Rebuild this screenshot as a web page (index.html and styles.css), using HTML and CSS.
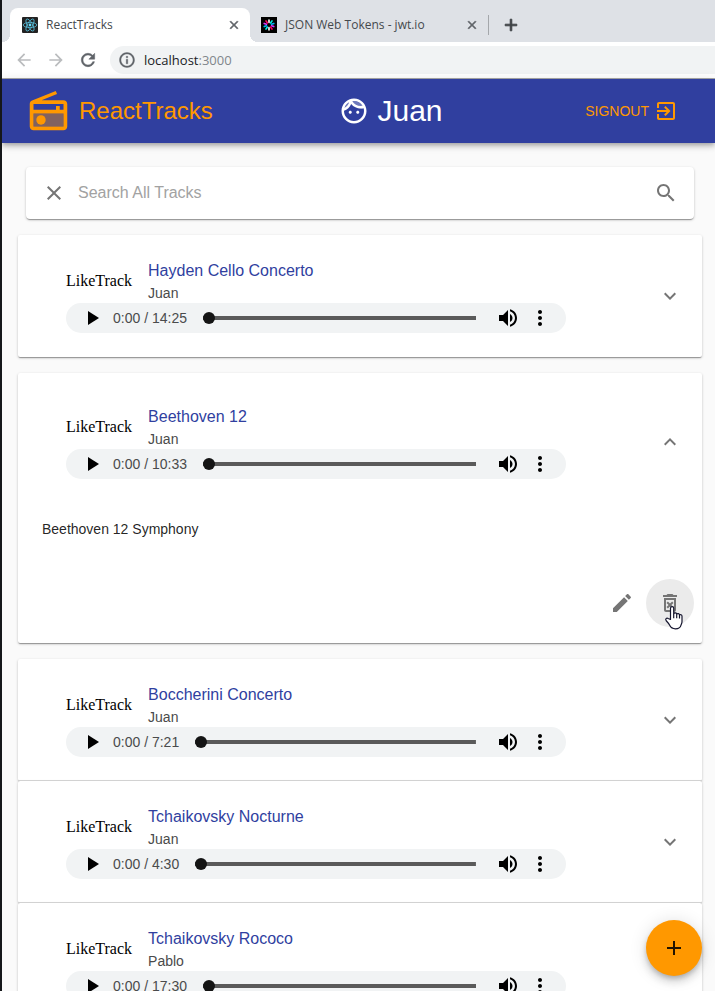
FILE: index.html
```html
<!DOCTYPE html>
<html lang="en">
<head>
<meta charset="utf-8">
<meta name="viewport" content="width=device-width, initial-scale=1">
<title>ReactTracks</title>
<link rel="stylesheet" href="styles.css">
</head>
<body>
<svg class="sprite" aria-hidden="true">
  <symbol id="i-play" viewBox="0 0 24 24"><path d="M8 5v14l11-7z"/></symbol>
  <symbol id="i-volume" viewBox="0 0 24 24"><path d="M3 9v6h4l5 5V4L7 9H3zm13.5 3c0-1.77-1.02-3.29-2.5-4.03v8.05c1.48-.73 2.5-2.25 2.5-4.02zM14 3.23v2.06c2.89.86 5 3.54 5 6.71s-2.11 5.85-5 6.71v2.06c4.01-.91 7-4.49 7-8.77s-2.99-7.86-7-8.77z"/></symbol>
  <symbol id="i-more" viewBox="0 0 24 24"><path d="M12 8c1.1 0 2-.9 2-2s-.9-2-2-2-2 .9-2 2 .9 2 2 2zm0 2c-1.1 0-2 .9-2 2s.9 2 2 2 2-.9 2-2-.9-2-2-2zm0 6c-1.1 0-2 .9-2 2s.9 2 2 2 2-.9 2-2-.9-2-2-2z"/></symbol>
  <symbol id="i-down" viewBox="0 0 24 24"><path d="M16.59 8.59L12 13.17 7.41 8.59 6 10l6 6 6-6z"/></symbol>
  <symbol id="i-up" viewBox="0 0 24 24"><path d="M12 8l-6 6 1.41 1.41L12 10.83l4.59 4.58L18 14z"/></symbol>
  <symbol id="i-close" viewBox="0 0 24 24"><path d="M19 6.41L17.59 5 12 10.59 6.41 5 5 6.41 10.59 12 5 17.59 6.41 19 12 13.41 17.59 19 19 17.59 13.41 12z"/></symbol>
  <symbol id="i-back" viewBox="0 0 24 24"><path d="M20 11H7.83l5.59-5.59L12 4l-8 8 8 8 1.41-1.41L7.83 13H20v-2z"/></symbol>
  <symbol id="i-forward" viewBox="0 0 24 24"><path d="M12 4l-1.41 1.41L16.17 11H4v2h12.17l-5.58 5.59L12 20l8-8z"/></symbol>
  <symbol id="i-add" viewBox="0 0 24 24"><path d="M19 13h-6v6h-2v-6H5v-2h6V5h2v6h6v2z"/></symbol>
</svg>

<div class="tabs">
  <div class="tab tab-active">
    <svg class="favicon" viewBox="0 0 16 16" aria-hidden="true">
      <rect width="16" height="16" rx="1" fill="#222"/>
      <g fill="none" stroke="#55bcd8" stroke-width=".8">
        <ellipse cx="8" cy="8" rx="6.8" ry="2.6"/>
        <ellipse cx="8" cy="8" rx="6.8" ry="2.6" transform="rotate(60 8 8)"/>
        <ellipse cx="8" cy="8" rx="6.8" ry="2.6" transform="rotate(120 8 8)"/>
      </g>
      <circle cx="8" cy="8" r="1.4" fill="#61dafb"/>
    </svg>
    <span class="tab-title">ReactTracks</span>
    <button class="tab-close" aria-label="Close tab"><svg><use href="#i-close"/></svg></button>
  </div>
  <div class="tab">
    <svg class="favicon" viewBox="0 0 16 16" aria-hidden="true">
      <rect width="16" height="16" fill="#000"/>
      <g stroke-width="1.6" stroke-linecap="round">
        <path d="M8 5.4V3M8 10.6V13" stroke="#fff"/>
        <path d="M9.5 5.9L11 3.9M6.5 10.1L5 12.1" stroke="#00f2e6"/>
        <path d="M10.5 7.2L12.8 6.4M5.5 8.8L3.2 9.6" stroke="#00b9f1"/>
        <path d="M10.5 8.8L12.8 9.6M5.5 7.2L3.2 6.4" stroke="#d63aff"/>
        <path d="M9.5 10.1L11 12.1M6.5 5.9L5 3.9" stroke="#fb015b"/>
      </g>
    </svg>
    <span class="tab-title">JSON Web Tokens - jwt.io</span>
    <button class="tab-close" aria-label="Close tab"><svg><use href="#i-close"/></svg></button>
  </div>
  <button class="tab-new" aria-label="New tab"><svg><use href="#i-add"/></svg></button>
</div>

<div class="toolbar">
  <button class="nav-btn nav-off" aria-label="Back"><svg><use href="#i-back"/></svg></button>
  <button class="nav-btn nav-off" aria-label="Forward"><svg><use href="#i-forward"/></svg></button>
  <button class="nav-btn" aria-label="Reload"><svg viewBox="0 0 24 24"><path stroke="currentColor" stroke-width=".6" d="M17.65 6.35C16.2 4.9 14.21 4 12 4c-4.42 0-7.99 3.58-7.99 8s3.57 8 7.99 8c3.73 0 6.84-2.55 7.73-6h-2.08c-.82 2.33-3.04 4-5.65 4-3.31 0-6-2.69-6-6s2.69-6 6-6c1.66 0 3.14.69 4.22 1.78L13 11h7V4l-2.35 2.35z"/></svg></button>
  <div class="address">
    <svg viewBox="0 0 24 24" aria-hidden="true"><path stroke="currentColor" stroke-width=".5" d="M11 17h2v-6h-2v6zm1-15C6.48 2 2 6.48 2 12s4.480 10 10 10 10-4.480 10-10S17.520 2 12 2zm0 18c-4.410 0-8-3.590-8-8s3.590-8 8-8 8 3.590 8 8-3.590 8-8 8zM11 9h2V7h-2v2z"/></svg>
    <span>localhost<span class="port">:3000</span></span>
  </div>
</div>

<header class="appbar">
  <a class="brand" href="#">
    <svg viewBox="0 0 24 24" aria-hidden="true"><path opacity=".4" d="M4 13h16v7H4z"/><path fill-rule="evenodd" d="M2 20c0 1.100.9 2 2 2h16c1.100 0 2-.9 2-2V8c0-1.110-.9-2-2-2H8.300l8.260-3.340L15.880 1 3.240 6.150C2.510 6.430 2 7.170 2 8v12zM4 8h16v3h-2V9h-2v2H4V8zm0 5h16v7H4v-7z"/><circle cx="8" cy="16.500" r="2.500"/></svg>
    <span>ReactTracks</span>
  </a>
  <a class="user" href="#">
    <svg viewBox="0 0 24 24" aria-hidden="true"><path opacity=".3" d="M17.500 10c.75 0 1.470-.09 2.170-.24C18.740 6.440 15.660 4 12 4c-.55 0-1.090.06-1.610.17C11.950 7.640 14.530 10 17.500 10zM8.080 5.030C6.370 6 5.050 7.580 4.420 9.470c1.710-.97 3.030-2.550 3.660-4.440z"/><path d="M10.250 13c0 .69-.56 1.250-1.250 1.250S7.750 13.690 7.750 13s.56-1.250 1.250-1.250 1.250.56 1.250 1.250zM15 11.750c-.69 0-1.250.56-1.250 1.250s.56 1.250 1.250 1.250 1.250-.56 1.250-1.250-.56-1.250-1.250-1.250zm7 .25c0 5.520-4.480 10-10 10S2 17.520 2 12 6.480 2 12 2s10 4.480 10 10zM10.660 4.120C12.060 6.440 14.600 8 17.500 8c.46 0 .91-.05 1.340-.12C17.440 5.560 14.900 4 12 4c-.46 0-.91.05-1.340.12zM4.420 9.470c1.710-.97 3.030-2.550 3.660-4.440C6.370 6 5.050 7.580 4.420 9.470zM20 12c0-.78-.12-1.530-.33-2.240-.7.15-1.420.24-2.170.24-3.130 0-5.920-1.440-7.760-3.690C8.690 8.870 6.600 10.880 4 11.860c.01.04 0 .09 0 .14 0 4.410 3.590 8 8 8s8-3.590 8-8z"/></svg>
    <span>Juan</span>
  </a>
  <button class="signout"><span>SIGNOUT</span><svg viewBox="0 0 24 24" aria-hidden="true"><path d="M10.090 15.590L11.500 17l5-5-5-5-1.410 1.410L12.670 11H3v2h9.670l-2.580 2.590zM19 3H5c-1.110 0-2 .9-2 2v4h2V5h14v14H5v-4H3v4c0 1.100.89 2 2 2h14c1.100 0 2-.9 2-2V5c0-1.100-.9-2-2-2z"/></svg></button>
</header>

<main>
  <form class="search">
    <button type="button" aria-label="Clear"><svg><use href="#i-close"/></svg></button>
    <input type="text" placeholder="Search All Tracks" aria-label="Search All Tracks">
    <button type="button" aria-label="Search"><svg viewBox="0 0 24 24"><path d="M15.500 14h-.79l-.28-.27C15.410 12.590 16 11.110 16 9.500 16 5.910 13.090 3 9.500 3S3 5.910 3 9.500 5.910 16 9.500 16c1.610 0 3.090-.59 4.230-1.570l.27.28v.79l5 4.990L20.490 19l-4.990-5zm-6 0C7.010 14 5 11.990 5 9.500S7.010 5 9.500 5 14 7.010 14 9.500 11.990 14 9.500 14z"/></svg></button>
  </form>

  <article class="track">
    <div class="summary">
      <div class="info">
        <div class="head"><span class="like">LikeTrack</span><div><h2>Hayden Cello Concerto</h2><a href="#">Juan</a></div></div>
        <div class="player">
          <button aria-label="Play"><svg><use href="#i-play"/></svg></button>
          <span class="time">0:00 / 14:25</span>
          <input type="range" min="0" max="865" value="0" aria-label="Position">
          <button aria-label="Mute"><svg><use href="#i-volume"/></svg></button>
          <button aria-label="More options"><svg><use href="#i-more"/></svg></button>
        </div>
      </div>
      <button class="toggle" aria-label="Expand"><svg><use href="#i-down"/></svg></button>
    </div>
  </article>

  <article class="track open">
    <div class="summary">
      <div class="info">
        <div class="head"><span class="like">LikeTrack</span><div><h2>Beethoven 12</h2><a href="#">Juan</a></div></div>
        <div class="player">
          <button aria-label="Play"><svg><use href="#i-play"/></svg></button>
          <span class="time">0:00 / 10:33</span>
          <input type="range" min="0" max="633" value="0" aria-label="Position">
          <button aria-label="Mute"><svg><use href="#i-volume"/></svg></button>
          <button aria-label="More options"><svg><use href="#i-more"/></svg></button>
        </div>
      </div>
      <button class="toggle" aria-label="Collapse"><svg><use href="#i-up"/></svg></button>
    </div>
    <p class="description">Beethoven 12 Symphony</p>
    <div class="actions">
      <button aria-label="Edit"><svg viewBox="0 0 24 24"><path d="M3 17.250V21h3.750L17.810 9.940l-3.750-3.750L3 17.250zM20.710 7.040c.39-.39.39-1.020 0-1.410l-2.340-2.340c-.39-.39-1.020-.39-1.410 0l-1.830 1.830 3.750 3.750 1.830-1.830z"/></svg></button>
      <button class="hovered" aria-label="Delete"><svg viewBox="0 0 24 24"><path d="M14.120 10.470L12 12.590l-2.130-2.120-1.410 1.410L10.590 14l-2.120 2.120 1.410 1.410L12 15.410l2.120 2.120 1.410-1.410L13.410 14l2.120-2.120zM15.500 4l-1-1h-5l-1 1H5v2h14V4zM6 19c0 1.100.9 2 2 2h8c1.100 0 2-.9 2-2V7H6v12zM8 9h8v10H8V9z"/></svg>
        <svg class="pointer" viewBox="0 0 20 26" aria-hidden="true"><path d="M6.500 14.500V3.200c0-2.200 3.200-2.200 3.200 0v5.600c.5-1.500 3-1.200 3 .4.800-1.100 2.800-.7 2.800.9.900-.9 2.500-.4 2.500 1.200v5.200c0 1.700-.6 2.500-1 3.600-.6 2.600-2 3.700-5.600 3.700-3.300 0-4.600-1.200-5.700-3.500-.8-1.700-2.200-3.200-3.500-4.600-1.300-1.600.3-3.100 2-2.200z" fill="#fff" stroke="#15152e" stroke-width="1.200" stroke-linejoin="round"/><path d="M9.700 8.800v4.400M12.700 9.200v4M15.500 10v3.600" fill="none" stroke="#15152e" stroke-width="1.200"/></svg>
      </button>
    </div>
  </article>

  <article class="track">
    <div class="summary">
      <div class="info">
        <div class="head"><span class="like">LikeTrack</span><div><h2>Boccherini Concerto</h2><a href="#">Juan</a></div></div>
        <div class="player">
          <button aria-label="Play"><svg><use href="#i-play"/></svg></button>
          <span class="time">0:00 / 7:21</span>
          <input type="range" min="0" max="441" value="0" aria-label="Position">
          <button aria-label="Mute"><svg><use href="#i-volume"/></svg></button>
          <button aria-label="More options"><svg><use href="#i-more"/></svg></button>
        </div>
      </div>
      <button class="toggle" aria-label="Expand"><svg><use href="#i-down"/></svg></button>
    </div>
  </article>

  <article class="track joined">
    <div class="summary">
      <div class="info">
        <div class="head"><span class="like">LikeTrack</span><div><h2>Tchaikovsky Nocturne</h2><a href="#">Juan</a></div></div>
        <div class="player">
          <button aria-label="Play"><svg><use href="#i-play"/></svg></button>
          <span class="time">0:00 / 4:30</span>
          <input type="range" min="0" max="270" value="0" aria-label="Position">
          <button aria-label="Mute"><svg><use href="#i-volume"/></svg></button>
          <button aria-label="More options"><svg><use href="#i-more"/></svg></button>
        </div>
      </div>
      <button class="toggle" aria-label="Expand"><svg><use href="#i-down"/></svg></button>
    </div>
  </article>

  <article class="track joined">
    <div class="summary">
      <div class="info">
        <div class="head"><span class="like">LikeTrack</span><div><h2>Tchaikovsky Rococo</h2><a href="#">Pablo</a></div></div>
        <div class="player">
          <button aria-label="Play"><svg><use href="#i-play"/></svg></button>
          <span class="time">0:00 / 17:30</span>
          <input type="range" min="0" max="1050" value="0" aria-label="Position">
          <button aria-label="Mute"><svg><use href="#i-volume"/></svg></button>
          <button aria-label="More options"><svg><use href="#i-more"/></svg></button>
        </div>
      </div>
      <button class="toggle" aria-label="Expand"><svg><use href="#i-down"/></svg></button>
    </div>
  </article>
</main>

<button class="fab" aria-label="Add track"><svg><use href="#i-add"/></svg></button>
</body>
</html>
```
FILE: styles.css
```css
* {
  box-sizing: border-box;
}

html {
  scrollbar-width: none;
}

body {
  margin: 0;
  border-left: 2px solid #15171a;
  background: #fafafa;
  color: rgba(0, 0, 0, 0.87);
  font-family: "Liberation Sans", Arial, sans-serif;
  font-size: 14px;
  line-height: 20px;
}

button {
  display: flex;
  align-items: center;
  justify-content: center;
  margin: 0;
  padding: 0;
  border: 0;
  background: none;
  color: inherit;
  font: inherit;
  cursor: pointer;
}

a {
  color: inherit;
  text-decoration: none;
}

svg {
  display: block;
  flex: none;
  width: 24px;
  height: 24px;
  fill: currentColor;
}

.sprite {
  position: absolute;
  width: 0;
  height: 0;
}

/* Browser window */

.tabs {
  display: flex;
  height: 42px;
  padding: 8px 8px 0;
  background: #dee1e6;
  color: #45494d;
  font-family: "Open Sans", "Noto Sans", sans-serif;
  font-size: 12px;
}

.tab {
  position: relative;
  display: flex;
  align-items: center;
  width: 240px;
  padding: 0 8px 0 12px;
}

.tab + .tab {
  width: 238px;
  padding: 0 8px 0 11px;
}

.tab-active {
  border-radius: 8px 8px 0 0;
  background: #fff;
}

.tab-active::before,
.tab-active::after {
  content: "";
  position: absolute;
  bottom: 0;
  width: 8px;
  height: 8px;
}

.tab-active::before {
  left: -8px;
  background: radial-gradient(circle at 0 0, transparent 8px, #fff 8px);
}

.tab-active::after {
  right: -8px;
  background: radial-gradient(circle at 100% 0, transparent 8px, #fff 8px);
}

.favicon {
  width: 16px;
  height: 16px;
}

.tab-title {
  flex: 1;
  margin-left: 8px;
  white-space: nowrap;
}

.tab-close {
  width: 16px;
  height: 16px;
  color: #5f6368;
}

.tab-close svg {
  width: 14px;
  height: 14px;
  stroke: currentColor;
}

.tab-new {
  width: 44px;
  height: 20px;
  margin-top: 7px;
  border-left: 1px solid #a4a7ab;
  color: #3c4043;
}

.tab-new svg {
  width: 20px;
  height: 20px;
  stroke: currentColor;
}

.toolbar {
  display: flex;
  align-items: center;
  gap: 12px;
  height: 37px;
  padding-left: 12px;
  border-bottom: 1px solid #a9a9a9;
  background: #fff;
  color: #5f6368;
}

.nav-btn svg {
  width: 20px;
  height: 20px;
}

.nav-off {
  color: #babcbe;
}

.address {
  display: flex;
  flex: 1;
  align-items: center;
  gap: 8px;
  height: 28px;
  padding-left: 8px;
  border-radius: 14px 0 0 14px;
  background: #f1f3f4;
  color: #202124;
  font-family: "Open Sans", "Noto Sans", sans-serif;
  font-size: 13px;
}

.address svg {
  width: 18px;
  height: 18px;
  color: #5f6368;
}

.port {
  color: #80868b;
}

/* App bar */

.appbar {
  position: relative;
  display: flex;
  align-items: center;
  justify-content: space-between;
  height: 64px;
  padding: 0 21px 0 24px;
  background: #303f9f;
  box-shadow: 0 2px 4px -1px rgba(0, 0, 0, 0.2), 0 4px 5px rgba(0, 0, 0, 0.14), 0 1px 10px rgba(0, 0, 0, 0.12);
  color: #ff9800;
}

.brand,
.user {
  display: flex;
  align-items: center;
  gap: 8px;
}

.brand {
  font-size: 24px;
}

.brand svg {
  width: 45px;
  height: 45px;
}

.user {
  color: #fff;
  font-size: 30px;
}

.user svg {
  width: 30px;
  height: 30px;
}

.signout {
  gap: 5px;
  height: 36px;
  padding: 0 16px;
}

/* Page */

main {
  padding: 24px 13px 24px 16px;
}

.search {
  display: flex;
  align-items: center;
  gap: 12px;
  height: 52px;
  margin: 0 8px 16px;
  padding: 0 16px;
  border-radius: 4px;
  color: #757575;
}

.search,
.track {
  background: #fff;
  box-shadow: 0 2px 1px -1px rgba(0, 0, 0, 0.2), 0 1px 1px rgba(0, 0, 0, 0.14), 0 1px 3px rgba(0, 0, 0, 0.2);
}

.search input {
  flex: 1;
  min-width: 0;
  padding: 0;
  border: 0;
  outline: 0;
  background: none;
  color: rgba(0, 0, 0, 0.87);
  font: inherit;
  font-size: 16px;
}

.search input::placeholder {
  color: #a2a2a2;
  opacity: 1;
}

.track {
  position: relative;
  border-radius: 2px;
}

.track.joined::before {
  content: "";
  position: absolute;
  top: -1px;
  left: 0;
  right: 0;
  height: 1px;
  background: #d2d2d2;
}

.track.open {
  margin: 16px 0;
}

.summary {
  display: flex;
  align-items: center;
  justify-content: space-between;
  padding: 24px 20px 24px 48px;
}

.open .summary {
  padding-top: 32px;
  padding-bottom: 32px;
}

.info {
  flex: 0 1 500px;
  min-width: 0;
}

.head {
  display: flex;
  align-items: center;
  gap: 16px;
  color: #4a4a4a;
}

.head h2 {
  margin: 0;
  color: #303f9f;
  font-size: 16px;
  font-weight: 400;
  line-height: 24px;
}

.head a {
  display: block;
}

.like {
  color: #000;
  font-family: "Liberation Serif", "Times New Roman", serif;
  font-size: 16px;
}

.toggle {
  color: #757575;
}

.player {
  display: flex;
  align-items: center;
  gap: 8px;
  height: 30px;
  padding: 0 14px;
  border-radius: 15px;
  background: #f1f3f4;
  color: #000;
}

.time {
  margin-left: 1px;
  color: #4a4b4c;
  white-space: nowrap;
}

.player input {
  flex: 1;
  min-width: 0;
  height: 12px;
  margin: 0 12px 0 8px;
  border-radius: 2px;
  background: linear-gradient(#5a5a5a, #5a5a5a) center / 100% 4px no-repeat;
  appearance: none;
}

.player input::-webkit-slider-thumb {
  width: 12px;
  height: 12px;
  border-radius: 50%;
  background: #141414;
  appearance: none;
}

.description {
  margin: 0;
  padding: 8px 24px 24px;
}

.actions {
  display: flex;
  justify-content: flex-end;
  padding: 16px 8px;
  color: #757575;
}

.actions button {
  position: relative;
  width: 48px;
  height: 48px;
  border-radius: 50%;
}

.actions .hovered {
  background: #ebebeb;
}

.pointer {
  position: absolute;
  top: 26px;
  left: 18px;
  width: 20px;
  height: 26px;
}

.fab {
  position: fixed;
  right: 13px;
  bottom: 15px;
  width: 56px;
  height: 56px;
  border-radius: 50%;
  background: #ff9800;
  box-shadow: 0 3px 5px -1px rgba(0, 0, 0, 0.2), 0 6px 10px rgba(0, 0, 0, 0.14), 0 1px 18px rgba(0, 0, 0, 0.12);
  color: rgba(0, 0, 0, 0.87);
}
```
